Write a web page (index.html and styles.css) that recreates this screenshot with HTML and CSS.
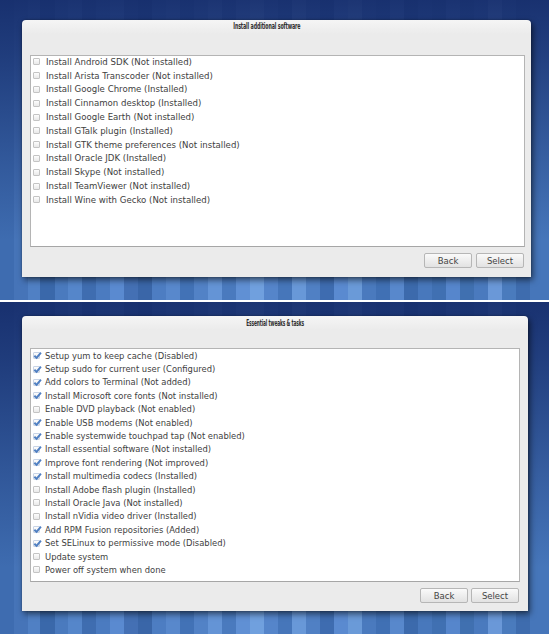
FILE: index.html
```html
<!DOCTYPE html>
<html lang="en">
<head>
    <meta charset="UTF-8" />
    <title>Fedora post-install</title>
    <link rel="stylesheet" href="styles.css">
</head>
<body>

<section class="screen screen-top">
    <div class="dialog dialog-software">
        <div class="dialog-title"><span>Install additional software</span></div>
        <ul class="choice-list">
            <li><span class="box"></span>Install Android SDK (Not installed)</li>
            <li><span class="box"></span>Install Arista Transcoder (Not installed)</li>
            <li><span class="box"></span>Install Google Chrome (Installed)</li>
            <li><span class="box"></span>Install Cinnamon desktop (Installed)</li>
            <li><span class="box"></span>Install Google Earth (Not installed)</li>
            <li><span class="box"></span>Install GTalk plugin (Installed)</li>
            <li><span class="box"></span>Install GTK theme preferences (Not installed)</li>
            <li><span class="box"></span>Install Oracle JDK (Installed)</li>
            <li><span class="box"></span>Install Skype (Not installed)</li>
            <li><span class="box"></span>Install TeamViewer (Not installed)</li>
            <li><span class="box"></span>Install Wine with Gecko (Not installed)</li>
        </ul>
        <div class="dialog-buttons">
            <button>Back</button>
            <button>Select</button>
        </div>
    </div>
</section>

<section class="screen screen-bottom">
    <div class="dialog dialog-tweaks">
        <div class="dialog-title"><span>Essential tweaks &amp; tasks</span></div>
        <ul class="choice-list" id="tweakList"></ul>
        <div class="dialog-buttons">
            <button>Back</button>
            <button>Select</button>
        </div>
    </div>
</section>

<script>
    // elenco delle operazioni, true = spuntata
    const tweaks = [
        ["Setup yum to keep cache (Disabled)", true],
        ["Setup sudo for current user (Configured)", true],
        ["Add colors to Terminal (Not added)", true],
        ["Install Microsoft core fonts (Not installed)", true],
        ["Enable DVD playback (Not enabled)", false],
        ["Enable USB modems (Not enabled)", true],
        ["Enable systemwide touchpad tap (Not enabled)", true],
        ["Install essential software (Not installed)", true],
        ["Improve font rendering (Not improved)", true],
        ["Install multimedia codecs (Installed)", true],
        ["Install Adobe flash plugin (Installed)", false],
        ["Install Oracle Java (Not installed)", false],
        ["Install nVidia video driver (Installed)", false],
        ["Add RPM Fusion repositories (Added)", true],
        ["Set SELinux to permissive mode (Disabled)", true],
        ["Update system", false],
        ["Power off system when done", false]
    ];

    const checkSvg = '<svg viewBox="0 0 10 10"><path d="M1.5 5.2 L4 7.6 L8.8 1.8" /></svg>';
    const tweakList = document.getElementById('tweakList');

    tweaks.forEach(([label, on]) => {
        const li = document.createElement('li');
        li.innerHTML = `<span class="box${on ? ' on' : ''}">${on ? checkSvg : ''}</span>${label}`;
        tweakList.appendChild(li);
    });
</script>

</body>
</html>
```

FILE: styles.css
```css
:root {
    --navy: rgba(20, 42, 104, 0.9);
    --dialog: #ebebeb;
    --text: #3e3e3e;
    --border: #b4b4b4;
    --check: #4f7fc2;
    --stripes: linear-gradient(to right,
        #3e6cb0 0 14px, #4674b8 14px 28px, #5080c4 28px 40px, #3a68aa 40px 55px,
        #4a7abe 55px 68px, #5586ca 68px 82px, #3f6db0 82px 96px, #4b7bc0 96px 110px,
        #5a8ad0 110px 124px, #4470b4 124px 138px, #3a66a8 138px 152px, #4d7dc2 152px 166px,
        #5888cc 166px 180px, #4272b6 180px 194px, #5282c6 194px 208px, #6494d6 208px 222px,
        #4a7abe 222px 236px, #6090d4 236px 250px, #70a0de 250px 264px, #5585ca 264px 278px,
        #4676ba 278px 292px, #6898d8 292px 306px, #5080c4 306px 320px, #3e6cb0 320px 334px,
        #5a8ad0 334px 348px, #6a9ad8 348px 362px, #4a7abe 362px 376px, #4070b4 376px 390px,
        #5888cc 390px 404px, #3c6aac 404px 418px, #4878bc 418px 432px, #4070b2 432px 446px,
        #5686cc 446px 460px, #4070b0 460px 474px, #4a7abe 474px 488px, #6a98d8 488px 502px,
        #4a7bbd 502px 516px, #3e6cae 516px 530px, #4676ba 530px 549px);
}

* {
    box-sizing: border-box;
    margin: 0;
    padding: 0;
}

body {
    width: 549px;
    height: 634px;
    overflow: hidden;
    background: #fff;
    font-family: "DejaVu Sans", sans-serif;
    color: var(--text);
}

/* sfondo a strisce verticali, scuro in alto */
.screen {
    display: flex;
    align-items: flex-start;
    padding-left: 22px;
    background:
        linear-gradient(to bottom, var(--navy) 0%, rgba(20, 42, 104, 0.72) 18%, rgba(20, 42, 104, 0.28) 55%, rgba(20, 42, 104, 0) 80%),
        var(--stripes);
}

.screen-top {
    height: 300px;
    padding-top: 20px;
}

.screen-bottom {
    height: 332px;
    margin-top: 2px;
    padding-top: 14px;
}

/* finestra di dialogo */
.dialog {
    display: flex;
    flex-direction: column;
    background: linear-gradient(to bottom, #f5f5f5 0, var(--dialog) 14px);
    border-radius: 4px 4px 0 0;
    box-shadow: 2px 3px 6px rgba(0, 0, 0, 0.55), 0 0 2px rgba(0, 0, 0, 0.35);
}

.dialog-software {
    width: 509px;
    height: 257px;
    padding: 0 6px 9px 8px;
}

.dialog-tweaks {
    width: 506px;
    height: 295px;
    padding: 0 8px 8px 8px;
}

.dialog-title {
    height: 35px;
    text-align: center;
    padding: 2px 22px 0 0;
    font-family: "DejaVu Sans Condensed", "DejaVu Sans", sans-serif;
    font-weight: bold;
    font-size: 8px;
    color: #2e2e2e;
}

.dialog-tweaks .dialog-title {
    height: 32px;
    padding: 3px 0 0 0;
}

.dialog-title span {
    display: inline-block;
    transform: scaleX(0.66);
    letter-spacing: -0.2px;
}

.dialog-tweaks .dialog-title span {
    transform: scaleX(0.6);
}

/* elenco con caselle */
.choice-list {
    list-style: none;
    background: #fff;
    border: 1px solid var(--border);
    border-bottom-color: #a6a6a6;
    font-size: 8.6px;
}

.dialog-software .choice-list {
    height: 192px;
}

.dialog-tweaks .choice-list {
    height: 234px;
    font-size: 8.4px;
}

.choice-list li {
    display: flex;
    align-items: center;
    height: 13.8px;
    white-space: nowrap;
}

.dialog-software .choice-list li:first-child {
    margin-top: -1px;
}

.dialog-tweaks .choice-list li {
    height: 13.4px;
}

.box {
    flex: none;
    position: relative;
    width: 7px;
    height: 7px;
    margin: 0 6px 0 2px;
    border: 1px solid #c4c4c4;
    border-radius: 1px;
    background: linear-gradient(to bottom, #fdfdfd, #e9e9e9);
}

.dialog-tweaks .box {
    margin-right: 5px;
}

.box svg {
    position: absolute;
    left: -1px;
    top: -2px;
    width: 9px;
    height: 9px;
    fill: none;
    stroke: var(--check);
    stroke-width: 2.2;
}

.box.on {
    border-color: #c8d4e6;
}

/* pulsanti */
.dialog-buttons {
    display: flex;
    justify-content: flex-end;
    gap: 4px;
    margin-top: auto;
    padding-right: 1px;
}

.dialog-tweaks .dialog-buttons {
    gap: 3px;
}

.dialog-buttons button {
    width: 48px;
    height: 15px;
    font-family: "DejaVu Sans", sans-serif;
    font-size: 8.5px;
    color: #444;
    background: linear-gradient(to bottom, #fafafa, #e2e2e2);
    border: 1px solid #b6b6b6;
    border-radius: 2px;
}
```
